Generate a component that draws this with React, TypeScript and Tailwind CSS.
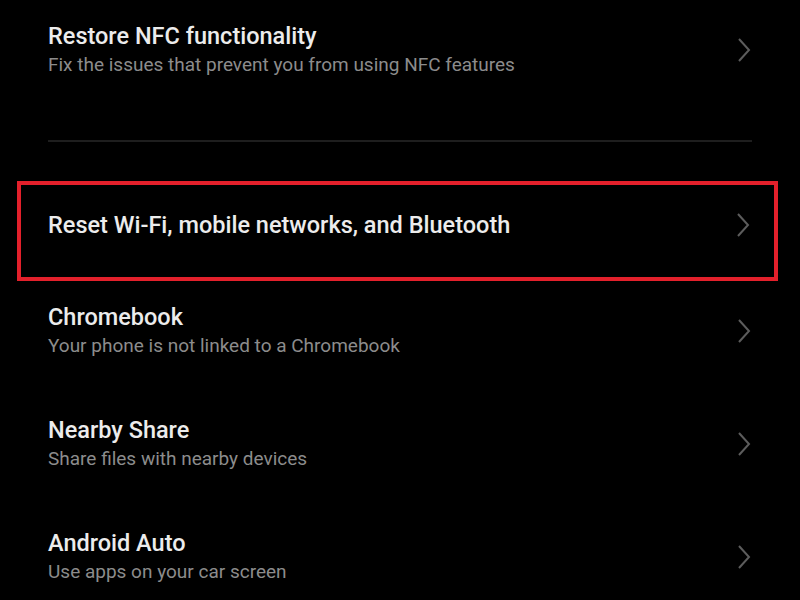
const Chevron = () => (
  <svg width="14" height="26" viewBox="0 0 14 26" fill="none" className="shrink-0">
    <polyline points="2,2 12,13 2,24" stroke="#5c5c5c" strokeWidth="2" />
  </svg>
);

type Item = { title: string; sub?: string };

const items: Item[] = [
  { title: "Chromebook", sub: "Your phone is not linked to a Chromebook" },
  { title: "Nearby Share", sub: "Share files with nearby devices" },
  { title: "Android Auto", sub: "Use apps on your car screen" },
];

const Row = ({ title, sub }: Item) => (
  <div className="flex items-center justify-between pl-12 pr-[49px]">
    <div className="flex flex-col">
      <span className="text-[23.5px] leading-[30px] font-medium text-[#ececec]">{title}</span>
      {sub && <span className="mt-[1px] text-[19px] leading-[26px] text-[#8c8c8c]">{sub}</span>}
    </div>
    <Chevron />
  </div>
);

export default function App() {
  return (
    <div className="w-[800px] h-[600px] bg-black overflow-hidden font-['Roboto',sans-serif]">
      <div className="pt-[21px] flex items-center justify-between pl-12 pr-[49px]">
        <div className="flex flex-col">
          <span className="text-[23.5px] leading-[30px] font-medium text-[#ececec]">
            Restore NFC functionality
          </span>
          <span className="mt-[1px] text-[19px] leading-[26px] text-[#8c8c8c]">
            Fix the issues that prevent you from using NFC features
          </span>
        </div>
        <Chevron />
      </div>
      <div className="mt-[62px] mx-12 h-[2px] bg-[#1e1e1e]" />
      <div className="mt-[39px] ml-[17px] w-[761px] h-[100px] border-4 border-[#e3202b] flex items-center justify-between pl-[27px] pr-[24px] pb-[12px]">
        <span className="text-[23.5px] leading-[30px] font-medium text-[#ececec]">
          Reset Wi-Fi, mobile networks, and Bluetooth
        </span>
        <Chevron />
      </div>
      <div className="mt-[21px] flex flex-col gap-[56px]">
        {items.map((it) => (
          <Row key={it.title} {...it} />
        ))}
      </div>
    </div>
  );
}
